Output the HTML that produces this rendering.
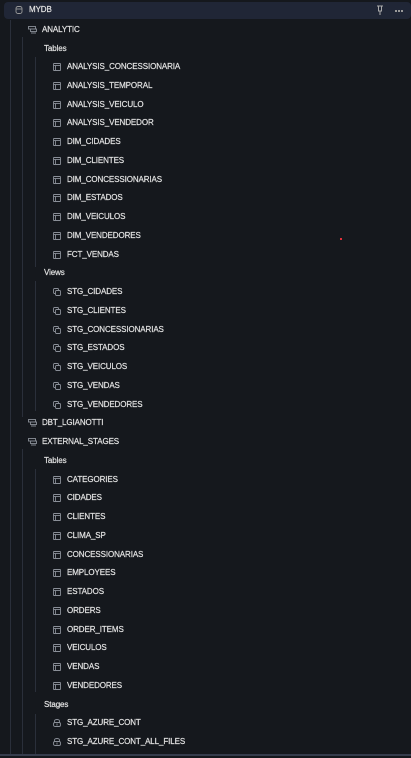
<!DOCTYPE html>
<html><head><style>
html,body{margin:0;padding:0;background:#15181d;width:411px;height:757px;overflow:hidden;font-family:"Liberation Sans",sans-serif;}
.hd{position:absolute;left:4px;top:2px;width:407px;height:17px;background:#202636;border-radius:4px;}
.w{position:absolute;left:0;top:1px;width:411px;height:757px}
.r{position:absolute;height:12px;line-height:12px;font-size:8px;color:#e2e2e2;white-space:nowrap;letter-spacing:-0.1px;-webkit-text-stroke:0.2px #e2e2e2}
.vl{position:absolute;width:1px;background:#2a2f3a}
.ic{position:absolute;width:8px;height:8px}
.bot{position:absolute;left:0;top:754px;width:411px;height:2px;background:#363c4c}
.d{position:absolute;top:10px;width:2px;height:2px;background:#999}
</style></head><body>
<div class="hd"></div>
<svg class="ic" style="left:15px;top:6px" viewBox="0 0 8 8"><rect x="1" y="0.5" width="6" height="7" rx="2" fill="none" stroke="#999" stroke-width="0.9"/><line x1="1" y1="3" x2="7" y2="3" stroke="#999" stroke-width="0.9"/></svg>
<div class="r" style="left:29px;top:4px">MYDB</div>
<svg style="position:absolute;left:376px;top:5px" width="8" height="10" fill="none" stroke="#aaa" stroke-width="1"><line x1="1" y1="1" x2="7" y2="1"/><line x1="2" y1="6" x2="6" y2="6"/><line x1="2.5" y1="1" x2="2.5" y2="6"/><line x1="5.5" y1="1" x2="5.5" y2="6"/><line x1="4" y1="6" x2="4" y2="10"/></svg>
<div class="d" style="left:395px"></div><div class="d" style="left:398px"></div><div class="d" style="left:401px"></div>
<div class="w">
<div class="vl" style="left:10px;top:19px;height:734px"></div>
<div class="vl" style="left:22px;top:36px;height:380px"></div>
<div class="vl" style="left:22px;top:448px;height:305px"></div>
<div class="vl" style="left:35px;top:56px;height:210px"></div>
<div class="vl" style="left:35px;top:280px;height:130px"></div>
<div class="vl" style="left:35px;top:468px;height:223px"></div>
<div class="vl" style="left:35px;top:713px;height:40px"></div>

<div class="r" style="left:42px;top:23px">ANALYTIC</div>
<div class="r" style="left:44px;top:42px">Tables</div>
<div class="r" style="left:67px;top:60px">ANALYSIS_CONCESSIONARIA</div>
<div class="r" style="left:67px;top:79px">ANALYSIS_TEMPORAL</div>
<div class="r" style="left:67px;top:98px">ANALYSIS_VEICULO</div>
<div class="r" style="left:67px;top:116px">ANALYSIS_VENDEDOR</div>
<div class="r" style="left:67px;top:135px">DIM_CIDADES</div>
<div class="r" style="left:67px;top:154px">DIM_CLIENTES</div>
<div class="r" style="left:67px;top:173px">DIM_CONCESSIONARIAS</div>
<div class="r" style="left:67px;top:191px">DIM_ESTADOS</div>
<div class="r" style="left:67px;top:210px">DIM_VEICULOS</div>
<div class="r" style="left:67px;top:229px">DIM_VENDEDORES</div>
<div class="r" style="left:67px;top:248px">FCT_VENDAS</div>
<div class="r" style="left:44px;top:266px">Views</div>
<div class="r" style="left:67px;top:285px">STG_CIDADES</div>
<div class="r" style="left:67px;top:304px">STG_CLIENTES</div>
<div class="r" style="left:67px;top:323px">STG_CONCESSIONARIAS</div>
<div class="r" style="left:67px;top:341px">STG_ESTADOS</div>
<div class="r" style="left:67px;top:360px">STG_VEICULOS</div>
<div class="r" style="left:67px;top:379px">STG_VENDAS</div>
<div class="r" style="left:67px;top:398px">STG_VENDEDORES</div>
<div class="r" style="left:42px;top:416px">DBT_LGIANOTTI</div>
<div class="r" style="left:42px;top:435px">EXTERNAL_STAGES</div>
<div class="r" style="left:44px;top:454px">Tables</div>
<div class="r" style="left:67px;top:473px">CATEGORIES</div>
<div class="r" style="left:67px;top:491px">CIDADES</div>
<div class="r" style="left:67px;top:510px">CLIENTES</div>
<div class="r" style="left:67px;top:529px">CLIMA_SP</div>
<div class="r" style="left:67px;top:548px">CONCESSIONARIAS</div>
<div class="r" style="left:67px;top:566px">EMPLOYEES</div>
<div class="r" style="left:67px;top:585px">ESTADOS</div>
<div class="r" style="left:67px;top:604px">ORDERS</div>
<div class="r" style="left:67px;top:623px">ORDER_ITEMS</div>
<div class="r" style="left:67px;top:641px">VEICULOS</div>
<div class="r" style="left:67px;top:660px">VENDAS</div>
<div class="r" style="left:67px;top:679px">VENDEDORES</div>
<div class="r" style="left:44px;top:698px">Stages</div>
<div class="r" style="left:67px;top:716px">STG_AZURE_CONT</div>
<div class="r" style="left:67px;top:735px">STG_AZURE_CONT_ALL_FILES</div>

<svg width="411" height="757" style="position:absolute;left:0;top:0" fill="none" stroke="#8a8f98" stroke-width="0.9">
<defs>
<g id="sch"><rect x="0.5" y="0.5" width="7" height="2.5"/><rect x="2.5" y="3" width="6" height="2.5"/><line x1="3" y1="7" x2="8" y2="7"/></g>
<g id="tb"><rect x="0.5" y="0.5" width="7" height="7" rx="0.5"/><line x1="0.5" y1="2.5" x2="7.5" y2="2.5"/><line x1="2.5" y1="2.5" x2="2.5" y2="7.5"/></g>
<g id="vw"><rect x="0.5" y="0.5" width="5" height="5" rx="1"/><rect x="2.5" y="2.5" width="5" height="5" rx="1" fill="#15181d"/></g>
<g id="st"><path d="M1.5 3.5 V2 a2.5 1.5 0 0 1 5 0 V3.5"/><rect x="0.5" y="3.5" width="7" height="4" rx="1.5"/><line x1="4" y1="4.5" x2="4" y2="6.5"/></g>
</defs>
<use href="#sch" x="28" y="25"/><use href="#sch" x="28" y="418"/><use href="#sch" x="28" y="437"/>
<use href="#tb" x="53" y="62"/><use href="#tb" x="53" y="81"/><use href="#tb" x="53" y="100"/><use href="#tb" x="53" y="118"/><use href="#tb" x="53" y="137"/><use href="#tb" x="53" y="156"/><use href="#tb" x="53" y="175"/><use href="#tb" x="53" y="193"/><use href="#tb" x="53" y="212"/><use href="#tb" x="53" y="231"/><use href="#tb" x="53" y="250"/>
<use href="#vw" x="53" y="287"/><use href="#vw" x="53" y="306"/><use href="#vw" x="53" y="325"/><use href="#vw" x="53" y="343"/><use href="#vw" x="53" y="362"/><use href="#vw" x="53" y="381"/><use href="#vw" x="53" y="400"/>
<use href="#tb" x="53" y="475"/><use href="#tb" x="53" y="493"/><use href="#tb" x="53" y="512"/><use href="#tb" x="53" y="531"/><use href="#tb" x="53" y="550"/><use href="#tb" x="53" y="568"/><use href="#tb" x="53" y="587"/><use href="#tb" x="53" y="606"/><use href="#tb" x="53" y="625"/><use href="#tb" x="53" y="643"/><use href="#tb" x="53" y="662"/><use href="#tb" x="53" y="681"/>
<use href="#st" x="53" y="718"/><use href="#st" x="53" y="737"/>
<rect x="340" y="237" width="2" height="2" fill="#e0303a" stroke="none"/>
</svg>
</div>
<div class="bot"></div>
</body></html>
